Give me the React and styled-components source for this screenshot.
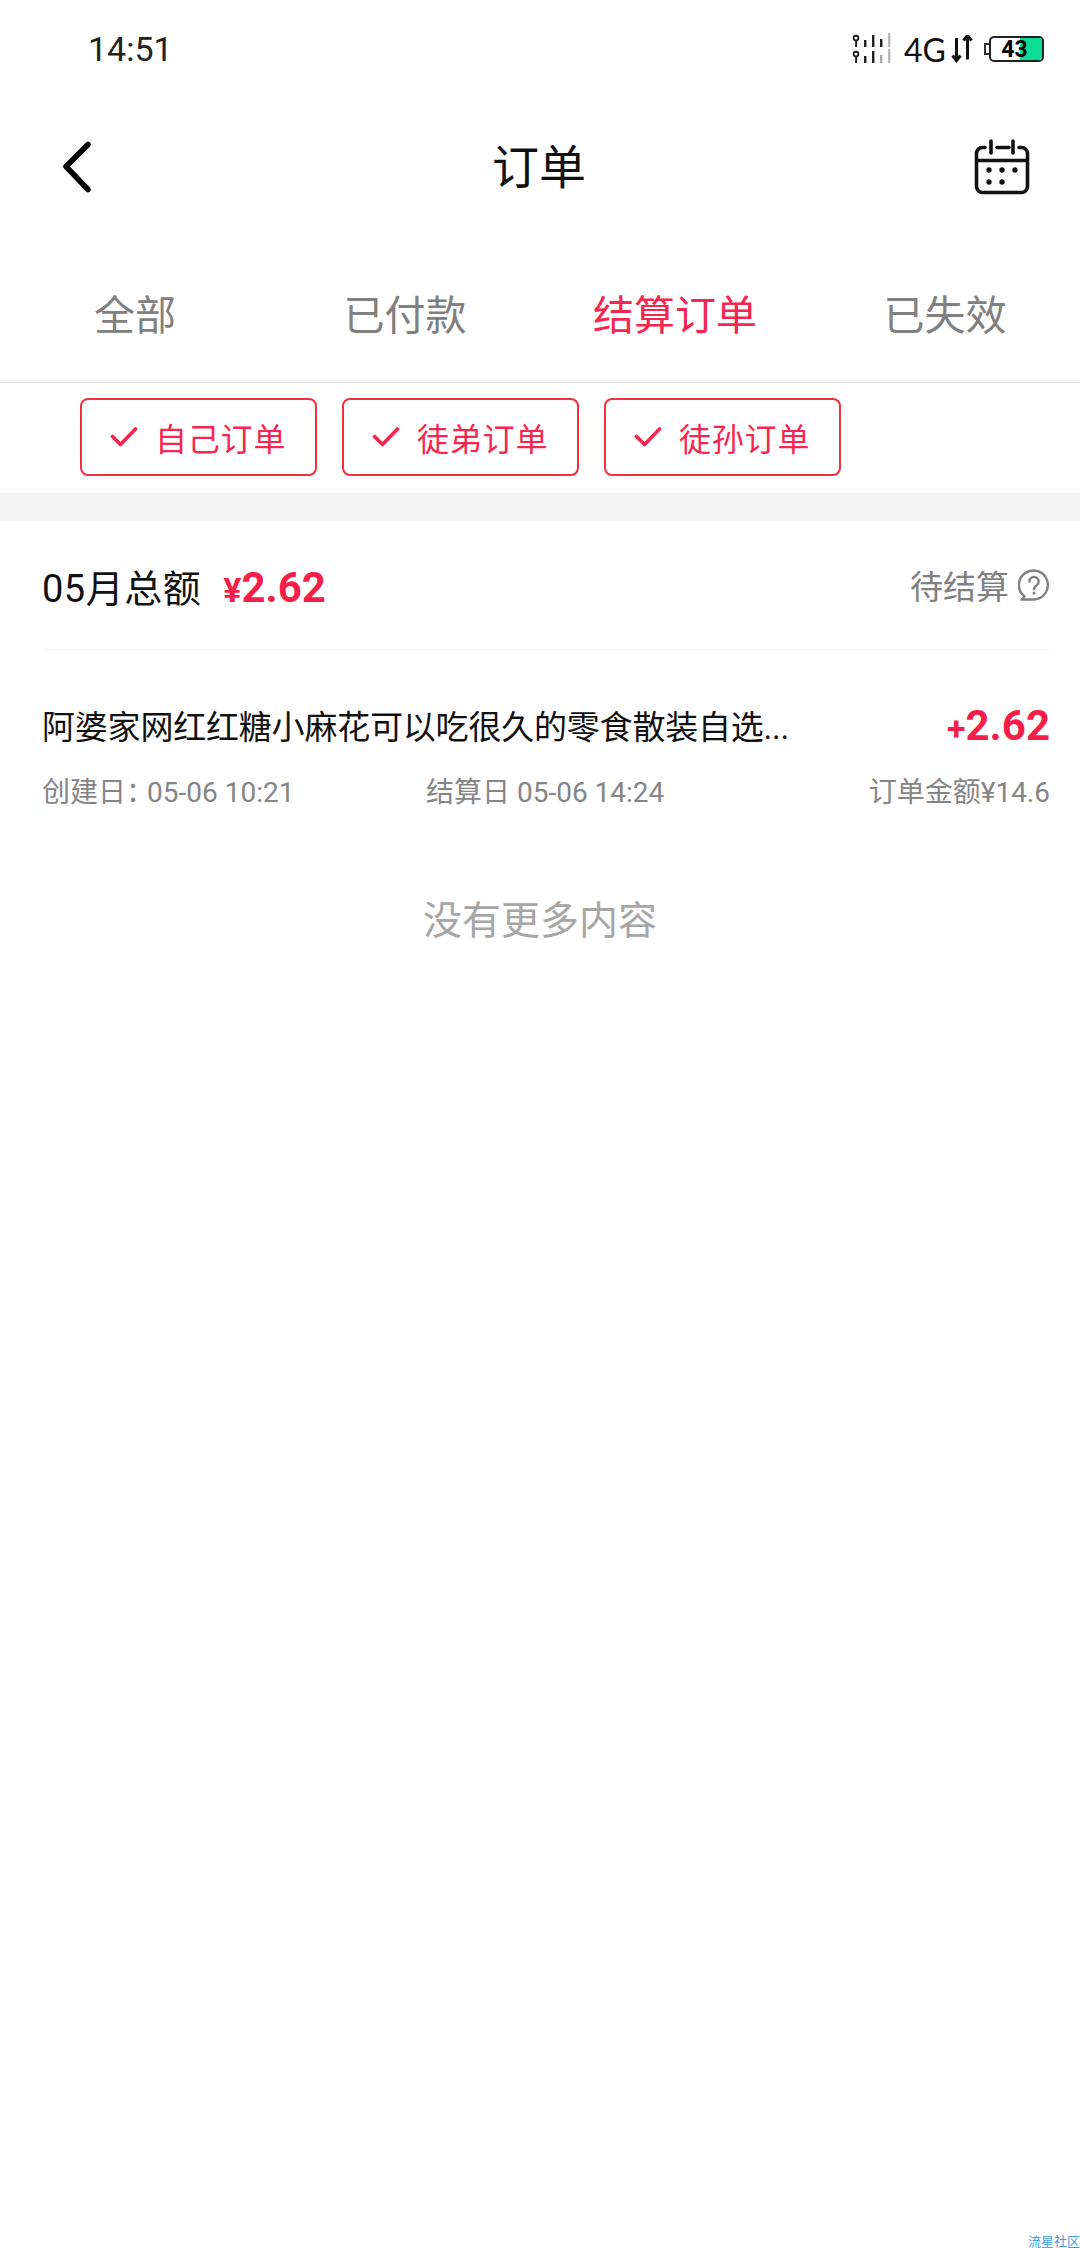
import React from "react";
import styled, { createGlobalStyle } from "styled-components";

const GlobalStyle = createGlobalStyle`
	html, body {
		margin: 0;
		padding: 0;
		background: #ffffff;
		font-family: Roboto, "Noto Sans CJK SC", sans-serif;
	}
	* {
		box-sizing: border-box;
	}
`;

const tabs = ["全部", "已付款", "结算订单", "已失效"];
const filters = ["自己订单", "徒弟订单", "徒孙订单"];

function SignalIcon() {
	const Row = ({ y }) => (
		<g>
			<circle cx="4" cy={y + 3} r="2.4" fill="none" stroke="#111" strokeWidth="1.6" />
			<rect x="3.2" y={y + 5} width="1.8" height="7" fill="#111" />
			<rect x="12" y={y + 5} width="2.4" height="7" fill="#222" />
			<rect x="20" y={y} width="2.4" height="12" fill="#222" />
			<rect x="28" y={y + 4} width="2.4" height="8" fill={y > 10 ? "#aaa" : "#222"} />
			<rect x="36" y={y - 2} width="2.4" height="14" fill="#b5b5b5" />
		</g>
	);
	return (
		<svg width="40" height="32" viewBox="0 0 40 32">
			<Row y={2} />
			<Row y={18} />
		</svg>
	);
}

function ArrowsIcon() {
	return (
		<svg width="22" height="28" viewBox="0 0 22 28">
			<path d="M5.5 3v22M1.5 20.5l4 5 4-5" fill="none" stroke="#111" strokeWidth="3" />
			<path d="M16.5 25V1M12.5 6l4-5 4 5" fill="none" stroke="#111" strokeWidth="3" transform="translate(0 -0.5)" />
		</svg>
	);
}

function BackIcon() {
	return (
		<svg width="30" height="52" viewBox="0 0 30 52">
			<path d="M26 3.5L4 25.5l22 23" fill="none" stroke="#000" strokeWidth="5.5" strokeLinecap="round" strokeLinejoin="round" />
		</svg>
	);
}

function CalendarIcon() {
	return (
		<svg width="56" height="56" viewBox="0 0 56 56">
			<path
				d="M11 8.5H8.5a6 6 0 0 0-6 6v33a6 6 0 0 0 6 6h39a6 6 0 0 0 6-6v-33a6 6 0 0 0-6-6H45M23 8.5h12M3 21.5h50"
				fill="none"
				stroke="#111"
				strokeWidth="3.6"
				strokeLinecap="round"
			/>
			<path d="M17 2v12M39 2v12" fill="none" stroke="#111" strokeWidth="3.6" strokeLinecap="round" />
			<circle cx="15" cy="31" r="2.7" fill="#111" />
			<circle cx="28" cy="31" r="2.7" fill="#111" />
			<circle cx="41" cy="31" r="2.7" fill="#111" />
			<circle cx="15" cy="43" r="2.7" fill="#111" />
			<circle cx="28" cy="43" r="2.7" fill="#111" />
		</svg>
	);
}

function CheckIcon() {
	return (
		<svg width="28" height="22" viewBox="0 0 28 22">
			<path d="M2.5 10.5l8 8L25.5 3" fill="none" stroke="#f5264f" strokeWidth="3.6" strokeLinecap="round" strokeLinejoin="round" />
		</svg>
	);
}

function HelpIcon() {
	return (
		<svg width="32" height="32" viewBox="0 0 32 32">
			<path
				d="M16 30.5H3.5l3-3A14.5 14.5 0 1 1 16 30.5z"
				fill="none"
				stroke="#808080"
				strokeWidth="2.4"
				strokeLinejoin="round"
			/>
			<path d="M11.5 12.5a4.6 4.6 0 1 1 7.2 3.8c-1.7 1.2-2.7 2-2.7 4" fill="none" stroke="#808080" strokeWidth="2.4" strokeLinecap="round" />
			<circle cx="16" cy="24" r="1.5" fill="#808080" />
		</svg>
	);
}

function App() {
	return (
		<MainContainer>
			<GlobalStyle />
			<StatusBar>
				<Time>14:51</Time>
				<StatusRight>
					<SignalIcon />
					<Network>4G</Network>
					<ArrowsIcon />
					<BatteryCap />
					<Battery>
						<BatteryFill />
						<BatteryText>43</BatteryText>
					</Battery>
				</StatusRight>
			</StatusBar>
			<NavBar>
				<BackButton>
					<BackIcon />
				</BackButton>
				<Title>订单</Title>
				<CalendarButton>
					<CalendarIcon />
				</CalendarButton>
			</NavBar>
			<TabBar>
				{tabs.map((tab, index) => (
					<Tab key={tab} active={index === 2}>
						{tab}
					</Tab>
				))}
			</TabBar>
			<FilterRow>
				{filters.map((filter) => (
					<FilterChip key={filter}>
						<CheckIcon />
						<FilterText>{filter}</FilterText>
					</FilterChip>
				))}
			</FilterRow>
			<GrayBand />
			<Section>
				<SummaryRow>
					<SummaryLeft>
						<Month>05月总额</Month>
						<Total>
							<Small>¥</Small>2.62
						</Total>
					</SummaryLeft>
					<SummaryRight>
						<Pending>待结算</Pending>
						<HelpIcon />
					</SummaryRight>
				</SummaryRow>
				<OrderRow>
					<OrderTitle>阿婆家网红红糖小麻花可以吃很久的零食散装自选...</OrderTitle>
					<Amount>
						<Small>+</Small>2.62
					</Amount>
				</OrderRow>
				<MetaRow>
					<MetaText>
						创建日<Colon>：</Colon>05-06 10:21
					</MetaText>
					<MetaText>结算日 05-06 14:24</MetaText>
					<MetaPrice>订单金额¥14.6</MetaPrice>
				</MetaRow>
			</Section>
			<NoMore>没有更多内容</NoMore>
			<Watermark>流星社区</Watermark>
		</MainContainer>
	);
}

export default App;

const MainContainer = styled.div`
	position: relative;
	width: 1080px;
	height: 2248px;
	background: #ffffff;
	overflow: hidden;
`;
const StatusBar = styled.div`
	height: 100px;
	padding: 0 36px 2px 88px;
	display: flex;
	align-items: center;
	justify-content: space-between;
`;
const Time = styled.span`
	color: #222222;
	font-size: 34px;
`;
const StatusRight = styled.div`
	display: flex;
	align-items: center;
`;
const Network = styled.span`
	margin: 0 5px 0 12px;
	color: #111111;
	font-family: Lato, sans-serif;
	font-size: 32px;
`;
const BatteryCap = styled.div`
	margin-left: 11px;
	width: 5px;
	height: 12px;
	border: 2px solid #333333;
	border-right: none;
`;
const Battery = styled.div`
	position: relative;
	width: 55px;
	height: 26px;
	border: 2px solid #222222;
	border-radius: 5px;
	overflow: hidden;
	display: flex;
	align-items: center;
	justify-content: center;
`;
const BatteryFill = styled.div`
	position: absolute;
	top: 0;
	right: 0;
	bottom: 0;
	width: 22px;
	background: #0bdc96;
`;
const BatteryText = styled.span`
	position: relative;
	color: #000000;
	font-size: 23px;
	font-weight: 700;
	margin-right: 4px;
`;
const NavBar = styled.div`
	height: 134px;
	padding: 0 50px 0 62px;
	display: flex;
	align-items: center;
	justify-content: space-between;
`;
const BackButton = styled.div`
	width: 42px;
	height: 52px;
	display: flex;
`;
const Title = styled.h1`
	margin: 0;
	color: #111111;
	font-size: 47px;
	font-weight: 400;
	line-height: 1;
`;
const CalendarButton = styled.div`
	width: 56px;
	height: 56px;
	display: flex;
`;
const TabBar = styled.div`
	height: 149px;
	padding-top: 8px;
	display: grid;
	grid-template-columns: repeat(4, 1fr);
	align-items: center;
	border-bottom: 1px solid #e2e2e2;
`;
const Tab = styled.div`
	text-align: center;
	font-size: 41px;
	color: ${(props) => (props.active ? "#f5264f" : "#808080")};
`;
const FilterRow = styled.div`
	height: 110px;
	padding: 15px 0 0 80px;
	display: flex;
	gap: 25px;
	align-items: flex-start;
`;
const FilterChip = styled.div`
	width: 237px;
	height: 78px;
	padding-left: 28px;
	display: flex;
	align-items: center;
	border: 2.5px solid #f0323f;
	border-radius: 8px;
`;
const FilterText = styled.span`
	margin-left: 17px;
	color: #f5264f;
	font-size: 32px;
	letter-spacing: 0.8px;
`;
const GrayBand = styled.div`
	height: 28px;
	background: #f4f4f4;
`;
const Section = styled.div`
	padding: 0 30px 0 42px;
`;
const SummaryRow = styled.div`
	height: 129px;
	display: flex;
	align-items: center;
	justify-content: space-between;
	border-bottom: 1px solid #f4f4f4;
`;
const SummaryLeft = styled.div`
	display: flex;
	align-items: baseline;
`;
const Month = styled.span`
	color: #111111;
	font-size: 38px;
	letter-spacing: 0.5px;
`;
const Total = styled.span`
	margin-left: 22px;
	color: #f51f4a;
	font-size: 42px;
	font-weight: 700;
`;
const Small = styled.span`
	font-size: 34px;
`;
const SummaryRight = styled.div`
	display: flex;
	align-items: center;
	gap: 9px;
`;
const Pending = styled.span`
	color: #808080;
	font-size: 33px;
`;
const OrderRow = styled.div`
	margin-top: 41px;
	height: 68px;
	display: flex;
	align-items: center;
	justify-content: space-between;
`;
const OrderTitle = styled.div`
	color: #111111;
	font-size: 33px;
	letter-spacing: -0.2px;
`;
const Amount = styled.div`
	color: #f51f4a;
	font-size: 42px;
	font-weight: 700;
`;
const MetaRow = styled.div`
	margin-top: 11px;
	display: grid;
	grid-template-columns: 384px auto 1fr;
	align-items: center;
`;
const MetaText = styled.span`
	color: #858585;
	font-size: 28px;
`;
const Colon = styled.span`
	letter-spacing: -7px;
`;
const MetaPrice = styled(MetaText)`
	text-align: right;
`;
const NoMore = styled.div`
	margin-top: 79px;
	text-align: center;
	color: #a6a6a6;
	font-size: 39px;
`;
const Watermark = styled.div`
	position: absolute;
	right: 0;
	bottom: 0;
	color: #3d9be8;
	font-size: 13px;
	line-height: 1;
`;
